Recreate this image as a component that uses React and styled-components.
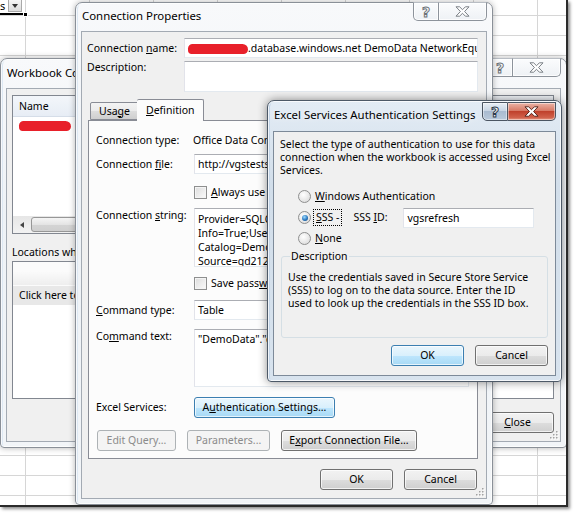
import React from 'react';
import styled, { createGlobalStyle, css } from 'styled-components';

const GlobalStyle = createGlobalStyle`
  html, body { margin: 0; padding: 0; background: #fff; }
  body {
    font-family: "Noto Sans", "Open Sans", sans-serif;
    font-size: 10.5px;
    line-height: 13px;
    color: #000;
  }
  * { box-sizing: border-box; }
`;

const Page = styled.div`
  width: 574px;
  height: 515px;
  background: #fff;
  overflow: hidden;
`;

/* the spreadsheet behind the dialogs */
const Sheet = styled.div`
  position: relative;
  width: 568px;
  height: 507px;
  border-right: 2px solid #2b2b2b;
  border-bottom: 2px solid #2b2b2b;
  box-shadow: 2px 2px 3px rgba(0, 0, 0, 0.45);
  overflow: hidden;
  background-color: #fff;
  background-image:
    linear-gradient(to right, #d6d6d6 1px, transparent 1px),
    linear-gradient(to bottom, #d6d6d6 1px, transparent 1px);
  background-size: 64px 20px;
  background-position: 25px 15px;
`;

const Cell = styled.div`
  position: relative;
  width: 25px;
  height: 15px;
  background: #fff;
  border-bottom: 2px solid #000;
  display: flex;
  align-items: flex-start;
  font-size: 11px;
  line-height: 12px;
`;

const DropButton = styled.div`
  margin-left: 3px;
  width: 14px;
  height: 12px;
  border: 1px solid #a9a9a9;
  border-top: none;
  background: linear-gradient(#f6f6f6, #dcdcdc);
  display: flex;
  align-items: center;
  justify-content: center;
  &::after {
    content: '';
    border-left: 3px solid transparent;
    border-right: 3px solid transparent;
    border-top: 4px solid #333;
  }
`;

const FillHandle = styled.span`
  position: absolute;
  right: -3px;
  bottom: -4px;
  width: 5px;
  height: 5px;
  background: #000;
  border: 1px solid #fff;
`;

/* window chrome */
const Frame = styled.div`
  position: absolute;
  left: ${p => p.$x}px;
  top: ${p => p.$y}px;
  width: ${p => p.$w}px;
  height: ${p => p.$h}px;
  display: flex;
  flex-direction: column;
  padding: 0 5px 5px;
  border: 1px solid ${p => (p.$active ? '#4d5967' : '#8a9098')};
  border-radius: 7px 7px 4px 4px;
  background: ${p =>
    p.$active
      ? 'linear-gradient(#e3ecf5, #d2deea 30%, #d8e3ee)'
      : 'linear-gradient(#f8f9fb, #eef2f6 40%, #f2f5f8)'};
  box-shadow:
    inset 0 0 0 1px rgba(255, 255, 255, 0.75),
    inset 3px 0 0 -1px ${p => (p.$active ? '#c2d4e8' : '#dde8f3')},
    0 0 ${p => (p.$active ? 10 : 6)}px rgba(0, 0, 0, ${p => (p.$active ? 0.45 : 0.3)});
`;

const TitleBar = styled.div`
  height: ${p => p.$h}px;
  flex: none;
  display: flex;
  align-items: center;
  justify-content: space-between;
  padding-bottom: 3px;
`;

const Title = styled.span`
  padding-left: 1px;
  font-size: 11.4px;
  color: #000;
  white-space: nowrap;
  text-shadow: 0 0 6px rgba(255, 255, 255, 0.9);
`;

const Caption = styled.div`
  align-self: flex-start;
  margin-top: ${p => (p.$active ? 1 : -1)}px;
  display: flex;
  flex: none;
`;

const CapButton = styled.div`
  height: 19px;
  width: ${p => (p.$wide ? 48 : 26)}px;
  display: flex;
  align-items: center;
  justify-content: center;
  border: 1px solid ${p => (p.$active ? '#4b5562' : '#8d939b')};
  border-top-color: ${p => (p.$active ? '#4b5562' : '#b8bdc4')};
  ${p => (p.$wide ? 'border-left: none;' : '')}
  border-radius: ${p => (p.$wide ? '0 0 5px 0' : '0 0 0 5px')};
  background: ${p => {
    if (!p.$active) return 'linear-gradient(#fbfcfd, #eef1f5)';
    return p.$wide
      ? 'linear-gradient(#eab2a5, #d77a66 45%, #c0412c 50%, #d0604a 85%, #e59a85)'
      : 'linear-gradient(#e9eff6, #c8d5e4 45%, #a9bbd0 50%, #b9c9db)';
  }};
  box-shadow: inset 0 0 0 1px rgba(255, 255, 255, ${p => (p.$active ? 0.45 : 0.8)});
`;

const HelpGlyph = styled.span`
  font-family: "DejaVu Sans", sans-serif;
  font-weight: bold;
  font-size: 14px;
  line-height: 14px;
  color: #fff;
  -webkit-text-stroke: 1px ${p => (p.$active ? '#2c3a4b' : '#6d7379')};
`;

const CloseGlyph = ({ active }) => (
  <svg width="15" height="11" viewBox="0 0 15 11">
    <polygon
      points="1,0.8 4.6,0.8 7.5,3.7 10.4,0.8 14,0.8 9.6,5.5 14,10.2 10.4,10.2 7.5,7.3 4.6,10.2 1,10.2 5.4,5.5"
      fill="#fff"
      stroke={active ? '#4a1a12' : '#6d7379'}
      strokeWidth="0.9"
      strokeLinejoin="round"
    />
  </svg>
);

const Client = styled.div`
  position: relative;
  flex: 1;
  display: flex;
  flex-direction: column;
  background: #f0f0f0;
  border: 1px solid ${p => (p.$active ? '#7d8a99' : '#a3aab3')};
  padding: ${p => p.$pad};
  overflow: hidden;
`;

const Grip = styled.svg`
  position: absolute;
  right: 1px;
  bottom: 1px;
`;

const SizeGrip = () => (
  <Grip width="10" height="10" viewBox="0 0 10 10">
    {[[8, 2], [8, 5], [5, 5], [8, 8], [5, 8], [2, 8]].map(([x, y]) => (
      <g key={`${x}-${y}`}>
        <rect x={x} y={y} width="1.5" height="1.5" fill="#fff" />
        <rect x={x - 1} y={y - 1} width="1.5" height="1.5" fill="#a2a2a2" />
      </g>
    ))}
  </Grip>
);

function Window({ x, y, w, h, titleHeight, title, active, pad, grip, children }) {
  return (
    <Frame $x={x} $y={y} $w={w} $h={h} $active={active}>
      <TitleBar $h={titleHeight}>
        <Title>{title}</Title>
        <Caption $active={active}>
          <CapButton $active={active}>
            <HelpGlyph $active={active}>?</HelpGlyph>
          </CapButton>
          <CapButton $active={active} $wide>
            <CloseGlyph active={active} />
          </CapButton>
        </Caption>
      </TitleBar>
      <Client $active={active} $pad={pad}>
        {children}
        {grip && <SizeGrip />}
      </Client>
    </Frame>
  );
}

/* controls */
const Key = styled.span`
  text-decoration: underline;
  text-underline-offset: 1px;
`;

const Button = styled.div`
  flex: none;
  width: ${p => p.$w}px;
  height: 21px;
  display: flex;
  align-items: center;
  justify-content: center;
  white-space: nowrap;
  border-radius: 3px;
  border: 1px solid ${p => (p.$disabled ? '#adb2b5' : p.$focus ? '#3c7fb1' : '#707070')};
  color: ${p => (p.$disabled ? '#8b8b8b' : '#000')};
  background: ${p =>
    p.$disabled
      ? '#f4f4f4'
      : p.$focus
      ? 'linear-gradient(#eaf6fd, #d9f0fc 50%, #bee6fd 51%, #a7d9f5)'
      : 'linear-gradient(#f2f2f2, #ebebeb 50%, #dddddd 51%, #cfcfcf)'};
  box-shadow: inset 0 0 0 1px rgba(255, 255, 255, ${p => (p.$disabled ? 0 : 0.7)});
`;

const TextBox = styled.div`
  height: ${p => p.$h || 20}px;
  min-width: 0;
  background: #fff;
  border: 1px solid #abadb3;
  border-color: #abadb3 #e3e9ef #e3e9ef #e2e3ea;
  padding: 3px 3px;
  overflow: hidden;
  white-space: nowrap;
`;

const CheckBox = styled.span`
  flex: none;
  width: 13px;
  height: 13px;
  border: 1px solid #8e8f8f;
  background: linear-gradient(135deg, #dcdcdc, #fbfbfb);
  box-shadow: inset 0 0 0 1px #f4f4f4;
`;

const Radio = styled.span`
  position: relative;
  flex: none;
  width: 13px;
  height: 13px;
  border-radius: 50%;
  border: 1px solid #8e8f8f;
  background: radial-gradient(circle at 40% 35%, #fff, #dedede 80%);
  ${p =>
    p.$checked &&
    css`
      &::after {
        content: '';
        position: absolute;
        left: 2.5px;
        top: 2.5px;
        width: 6px;
        height: 6px;
        border-radius: 50%;
        background: radial-gradient(circle at 40% 35%, #9fdcff, #2a78c0 55%, #0e3f73);
      }
    `}
`;

const Redaction = styled.span`
  display: inline-block;
  width: ${p => p.$w}px;
  height: 10px;
  border-radius: 5px 6px 5px 4px;
  background: #e8202a;
  vertical-align: middle;
`;

/* Workbook Connections */
const ListBox = styled.div`
  flex: none;
  height: ${p => p.$h}px;
  margin-top: ${p => p.$mt || 0}px;
  background: #fff;
  border: 1px solid #828790;
  display: flex;
  flex-direction: column;
`;

const ListHeader = styled.div`
  height: ${p => p.$h}px;
  flex: none;
  display: flex;
  align-items: center;
  padding-left: 6px;
  background: ${p => p.$bg};
  border-bottom: 1px solid ${p => p.$line || 'transparent'};
`;

const ListRow = styled.div`
  height: ${p => p.$h}px;
  flex: none;
  display: flex;
  align-items: center;
  padding-left: 6px;
  background: ${p => p.$bg || 'transparent'};
  white-space: nowrap;
`;

const HScroll = styled.div`
  margin-top: auto;
  height: 17px;
  flex: none;
  display: flex;
  align-items: center;
  background: linear-gradient(#e6e6e6, #f2f2f2);
`;

const ScrollArrow = styled.div`
  width: 17px;
  height: 17px;
  display: flex;
  align-items: center;
  justify-content: center;
  &::after {
    content: '';
    border-top: 3.5px solid transparent;
    border-bottom: 3.5px solid transparent;
    border-right: 4px solid #444;
  }
`;

const ScrollThumb = styled.div`
  margin-left: 1px;
  width: 300px;
  height: 15px;
  border: 1px solid #979797;
  border-radius: 3px;
  background: linear-gradient(#f5f5f5, #e4e4e4 50%, #d4d4d4 51%, #cfcfcf);
`;

const SectionLabel = styled.div`
  margin-top: ${p => p.$mt}px;
  height: 14px;
  line-height: 14px;
  white-space: nowrap;
`;

const ButtonRow = styled.div`
  display: flex;
  gap: 11px;
  justify-content: ${p => p.$justify || 'flex-start'};
  margin-top: ${p => p.$mt}px;
  padding-right: ${p => p.$pr || 0}px;
  padding-left: ${p => p.$pl || 0}px;
`;

function WorkbookConnections() {
  return (
    <Window x={0} y={58} w={567} h={390} titleHeight={29} title="Workbook Connections" pad="6px 6px 0 5px" grip>
      <ListBox $h={139}>
        <ListHeader $h={21} $bg="linear-gradient(#f3f6fa, #e7edf5)" $line="#d5dde8">Name</ListHeader>
        <ListRow $h={18}>
          <Redaction $w={52} />
        </ListRow>
        <HScroll>
          <ScrollArrow />
          <ScrollThumb />
        </HScroll>
      </ListBox>
      <SectionLabel $mt={11}>Locations where connections are used in this workbook</SectionLabel>
      <ListBox $h={138} $mt={2}>
        <ListHeader $h={24} $bg="linear-gradient(#fbfbfb 40%, #eeeeee)" />
        <ListRow $h={19} $bg="#e8e8e8">
          Click here to see where the selected connections are used
        </ListRow>
      </ListBox>
      <ButtonRow $mt={13} $justify="flex-end">
        <Button $w={73}>
          <Key>C</Key>lose
        </Button>
      </ButtonRow>
    </Window>
  );
}

/* Connection Properties */
const FormRow = styled.div`
  display: grid;
  grid-template-columns: ${p => p.$label}px 1fr;
  align-items: ${p => (p.$top ? 'start' : 'center')};
  margin-top: ${p => p.$mt || 0}px;
  min-height: ${p => p.$h || 0}px;
`;

const Label = styled.span`
  white-space: nowrap;
  padding-top: ${p => (p.$top ? 1 : 0)}px;
`;

const Value = styled.span`
  white-space: nowrap;
  margin-left: -1px;
`;

const Tabs = styled.div`
  display: flex;
  align-items: flex-end;
  height: 21px;
  margin: 7px 0 0 1px;
  padding-left: 2px;
  position: relative;
  z-index: 1;
`;

const Tab = styled.div`
  height: ${p => (p.$active ? 22 : 18)}px;
  margin-bottom: ${p => (p.$active ? -1 : 0)}px;
  padding: 0 ${p => (p.$active ? 9 : 8)}px;
  ${p => (p.$active ? 'margin-left: -2px;' : '')}
  display: flex;
  align-items: center;
  border: 1px solid #898c95;
  border-bottom: ${p => (p.$active ? 'none' : '1px solid #898c95')};
  border-radius: 2px 2px 0 0;
  background: ${p =>
    p.$active ? '#fcfcfc' : 'linear-gradient(#f3f3f3, #ebebeb 50%, #dddddd 51%, #cfcfcf)'};
  & + & { border-left: none; }
`;

const TabPanel = styled.div`
  height: 339px;
  margin-left: 1px;
  border: 1px solid #898c95;
  background: #fcfcfc;
  padding: 0 8px 0 7px;
  display: flex;
  flex-direction: column;
`;

const CheckLine = styled.label`
  display: flex;
  align-items: center;
  gap: 4px;
  white-space: nowrap;
`;

const ConnLines = styled.div`
  line-height: 14px;
  white-space: nowrap;
`;

function ConnectionProperties() {
  return (
    <Window x={75} y={2} w={418} h={503} titleHeight={28} title="Connection Properties" pad="6px 8px 0 5px" grip>
      <FormRow $label={97} $h={20}>
        <Label>
          Connection <Key>n</Key>ame:
        </Label>
        <TextBox>
          <Redaction $w={60} />.database.windows.net DemoData NetworkEquipment
        </TextBox>
      </FormRow>
      <FormRow $label={97} $mt={3} $top>
        <Label>Description:</Label>
        <TextBox $h={31} />
      </FormRow>
      <Tabs>
        <Tab>
          Usa<Key>g</Key>e
        </Tab>
        <Tab $active>
          <Key>D</Key>efinition
        </Tab>
      </Tabs>
      <TabPanel>
        <FormRow $label={98} $mt={10} $h={18}>
          <Label>Connection type:</Label>
          <Value>Office Data Connection</Value>
        </FormRow>
        <FormRow $label={98} $mt={5}>
          <Label>
            Connection <Key>f</Key>ile:
          </Label>
          <TextBox>http://vgstestsite/DataConnections/DemoData.odc</TextBox>
        </FormRow>
        <FormRow $label={98} $mt={10} $h={16}>
          <span />
          <CheckLine>
            <CheckBox />
            <span>
              <Key>A</Key>lways use connection file
            </span>
          </CheckLine>
        </FormRow>
        <FormRow $label={98} $mt={8} $top>
          <Label $top>
            Connection <Key>s</Key>tring:
          </Label>
          <TextBox $h={59}>
            <ConnLines>
              Provider=SQLOLEDB.1;Persist Security
              <br />
              Info=True;User ID=vgsadmin;Initial
              <br />
              Catalog=DemoData;Data
              <br />
              Source=gd2121xyz.database.windows.net
            </ConnLines>
          </TextBox>
        </FormRow>
        <FormRow $label={98} $mt={8} $h={16}>
          <span />
          <CheckLine>
            <CheckBox />
            <span>
              Save pass<Key>w</Key>ord
            </span>
          </CheckLine>
        </FormRow>
        <FormRow $label={98} $mt={9}>
          <Label>
            <Key>C</Key>ommand type:
          </Label>
          <TextBox>Table</TextBox>
        </FormRow>
        <FormRow $label={98} $mt={9} $top>
          <Label $top>
            Co<Key>m</Key>mand text:
          </Label>
          <TextBox $h={58}>"DemoData"."dbo"."NetworkEquipment"</TextBox>
        </FormRow>
        <FormRow $label={98} $mt={10}>
          <Label>Excel Services:</Label>
          <Button $w={141} $focus>
            A<Key>u</Key>thentication Settings...
          </Button>
        </FormRow>
        <ButtonRow $mt={12} $pl={1}>
          <Button $w={79} $disabled>
            Edit Query...
          </Button>
          <Button $w={83} $disabled>
            Parameters...
          </Button>
          <Button $w={136}>
            E<Key>x</Key>port Connection File...
          </Button>
        </ButtonRow>
      </TabPanel>
      <ButtonRow $mt={10} $justify="flex-end" $pr={1}>
        <Button $w={73}>OK</Button>
        <Button $w={73}>Cancel</Button>
      </ButtonRow>
    </Window>
  );
}

/* Excel Services Authentication Settings */
const Intro = styled.p`
  margin: 0;
  line-height: 13px;
  white-space: nowrap;
`;

const Choices = styled.div`
  margin-top: 9px;
  padding-left: 18px;
  display: flex;
  flex-direction: column;
`;

const Choice = styled.div`
  height: 21px;
  display: flex;
  align-items: center;
  gap: 4px;
  white-space: nowrap;
`;

const Focused = styled.span`
  outline: 1px dotted #000;
  outline-offset: 1px;
  padding: 0 1px;
`;

const IdLabel = styled.span`
  margin-left: 9px;
  width: 46px;
`;

const IdBox = styled(TextBox)`
  width: 131px;
`;

const Group = styled.fieldset`
  margin: 1px 0 0 1px;
  height: 88px;
  border: 1px solid #d5dfe5;
  border-radius: 3px;
  padding: 8px 6px 0;
  line-height: 13px;
  white-space: nowrap;
  min-width: 0;
`;

const Legend = styled.legend`
  padding: 0 1px;
  margin-left: 2px;
  line-height: 13px;
`;

function AuthenticationSettings() {
  return (
    <Window x={267} y={100} w={295} h={282} titleHeight={30} title="Excel Services Authentication Settings" pad="6px 7px 0 6px" active>
      <Intro>
        Select the type of authentication to use for this data
        <br />
        connection when the workbook is accessed using Excel
        <br />
        Services.
      </Intro>
      <Choices>
        <Choice>
          <Radio />
          <span>
            <Key>W</Key>indows Authentication
          </span>
        </Choice>
        <Choice>
          <Radio $checked />
          <Focused>
            <Key>S</Key>SS -
          </Focused>
          <IdLabel>
            SSS <Key>I</Key>D:
          </IdLabel>
          <IdBox>vgsrefresh</IdBox>
        </Choice>
        <Choice>
          <Radio />
          <span>
            <Key>N</Key>one
          </span>
        </Choice>
      </Choices>
      <Group>
        <Legend>Description</Legend>
        Use the credentials saved in Secure Store Service
        <br />
        (SSS) to log on to the data source. Enter the ID
        <br />
        used to look up the credentials in the SSS ID box.
      </Group>
      <ButtonRow $mt={7} $justify="flex-end">
        <Button $w={73} $focus>
          OK
        </Button>
        <Button $w={73}>Cancel</Button>
      </ButtonRow>
    </Window>
  );
}

export default function App() {
  return (
    <Page>
      <GlobalStyle />
      <Sheet>
        <Cell>
          s
          <DropButton />
          <FillHandle />
        </Cell>
        <WorkbookConnections />
        <ConnectionProperties />
        <AuthenticationSettings />
      </Sheet>
    </Page>
  );
}
